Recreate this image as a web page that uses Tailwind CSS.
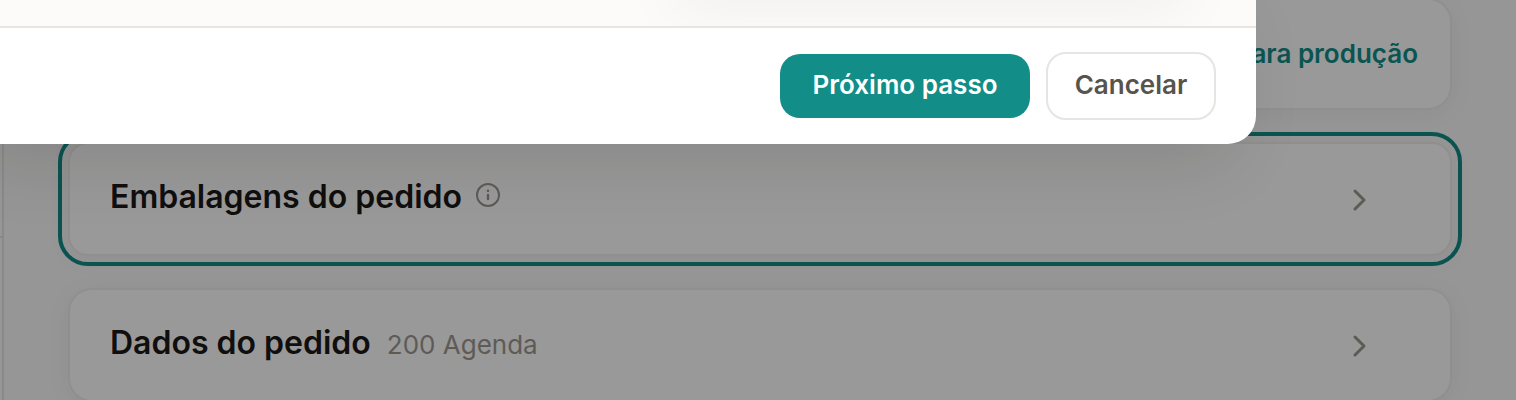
<!DOCTYPE html>
<html lang="pt-BR">
<head>
    <meta charset="UTF-8">
    <meta name="viewport" content="width=device-width, initial-scale=1.0">
    <title>Pedido</title>
    <script src="https://cdn.jsdelivr.net/npm/@tailwindcss/browser@4"></script>
</head>
<body class="bg-[#fafafa] font-['Inter',sans-serif] text-stone-900 overflow-hidden">
    <div class="relative flex h-screen overflow-hidden">
        <!-- Sidebar edge -->
        <aside class="w-1 shrink-0 border-r-2 border-stone-200">
            <div class="h-[238px] border-b-2 border-stone-200"></div>
        </aside>

        <main class="-mt-0.5 flex flex-1 flex-col gap-8 px-16">
            <section class="flex h-28 shrink-0 items-center justify-end rounded-3xl border-2 border-[#f1efed] bg-white px-8 shadow-[0_4px_24px_rgba(60,40,20,0.05)]">
                <a href="#" class="text-[26px] leading-8 font-semibold text-[#128d87]">para produção</a>
            </section>

            <!-- Highlighted section -->
            <div class="-m-[10px] shrink-0 rounded-[30px] border-4 border-[#128d87] p-[6px]">
                <section class="flex h-[114px] items-center rounded-[20px] border-2 border-[#f1efed] bg-white pr-[78px] pl-10 shadow-[0_4px_24px_rgba(60,40,20,0.05)]">
                    <h2 class="pb-1 text-[32px] leading-10 font-semibold">Embalagens do pedido</h2>
                    <svg class="mb-2 ml-3 size-7 text-[#9d9892]" viewBox="0 0 28 28" fill="none" stroke="currentColor" stroke-width="2" stroke-linecap="round">
                        <circle cx="14" cy="14" r="11"/>
                        <path d="M14 14v4M14 9.7v.2" stroke-width="2.4"/>
                    </svg>
                    <button aria-label="Abrir embalagens" class="ml-auto pt-0.5 text-[#9d9892]">
                        <svg class="size-8" viewBox="0 0 32 32" fill="none" stroke="currentColor" stroke-width="3" stroke-linecap="round" stroke-linejoin="round"><path d="M15 7l9 9-9 9"/></svg>
                    </button>
                </section>
            </div>

            <section class="flex h-[114px] shrink-0 items-center rounded-3xl border-2 border-[#f1efed] bg-white pr-[78px] pl-10 shadow-[0_4px_24px_rgba(60,40,20,0.05)]">
                <h2 class="pb-1 text-[32px] leading-10 font-semibold">Dados do pedido</h2>
                <span class="ml-4 text-[26px] leading-8 text-[#9d9892]">200 Agenda</span>
                <button aria-label="Abrir dados" class="ml-auto pt-0.5 text-[#9d9892]">
                    <svg class="size-8" viewBox="0 0 32 32" fill="none" stroke="currentColor" stroke-width="3" stroke-linecap="round" stroke-linejoin="round"><path d="M15 7l9 9-9 9"/></svg>
                </button>
            </section>
        </main>

        <div class="absolute inset-0 bg-black/40"></div>

        <!-- Modal -->
        <div role="dialog" class="absolute top-0 right-[260px] left-0 rounded-br-[28px] bg-white shadow-[-24px_16px_70px_rgba(28,25,16,0.13)]">
            <div class="h-[26px] overflow-hidden bg-[#fcfbf9]">
                <div class="-mt-10 mr-[68px] ml-auto h-8 w-[516px] shadow-[0_8px_60px_rgba(0,0,0,0.08)]"></div>
            </div>
            <footer class="flex items-center justify-end gap-4 border-t-2 border-[#e7e4e1] px-10 py-6">
                <button class="h-16 min-w-[250px] rounded-[20px] bg-[#128d87] px-8 pb-0.5 text-[26px] leading-8 font-semibold text-white">Próximo passo</button>
                <button class="h-[68px] min-w-[170px] rounded-[20px] border-2 border-[#e7e4e1] bg-white px-6 pb-0.5 text-[26px] leading-8 font-semibold text-stone-600">Cancelar</button>
            </footer>
        </div>
    </div>
</body>
</html>
